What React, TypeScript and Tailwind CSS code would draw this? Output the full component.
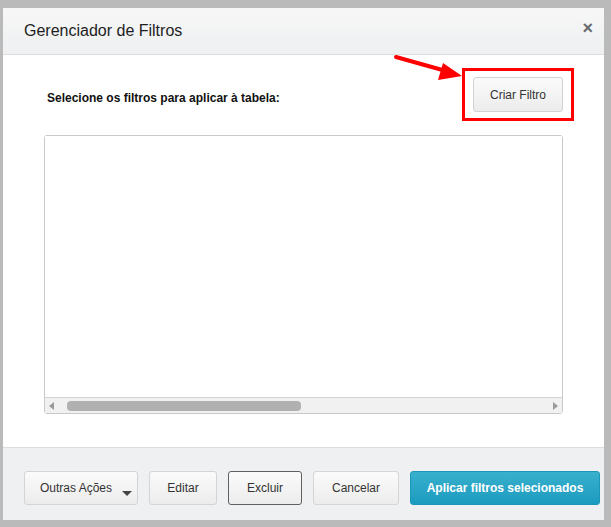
const Btn = ({ children, className = "" }: { children: React.ReactNode; className?: string }) => (
  <button
    className={
      "h-[34px] rounded-[3px] border bg-gradient-to-b from-[#fbfbfb] to-[#ececec] text-[12px] text-[#333] " +
      className
    }
  >
    {children}
  </button>
);

export default function App() {
  return (
    <div
      className="relative w-[611px] h-[527px] bg-[#bababa] pt-[8px] pl-[3px] pr-[7px] pb-[7px]"
      style={{ fontFamily: '"Liberation Sans", Arial, sans-serif' }}
    >
      <div className="flex flex-col h-full bg-white">
        {/* header */}
        <div className="h-[47px] shrink-0 flex items-center justify-between pl-[21px] pr-[11px] border-b border-[#dcdcdc] bg-gradient-to-b from-[#f7f7f7] to-[#eef0f1]">
          <span className="text-[16px] text-[#1e1e1e]">Gerenciador de Filtros</span>
          <span className="text-[18px] font-bold leading-none text-[#666a70] -mt-[6px]">×</span>
        </div>

        {/* body */}
        <div className="flex-1 flex flex-col px-[41px] pt-[22px]">
          <div className="flex items-center justify-between h-[35px]">
            <span className="pl-[3px] pt-[6px] text-[12px] font-bold text-[#111]">
              Selecione os filtros para aplicar à tabela:
            </span>
            <div className="relative">
              <Btn className="w-[90px] h-[35px] border-[#d2d2d2] text-[11px]">Criar Filtro</Btn>
              <div className="absolute -left-[11px] -right-[11px] -top-[9px] -bottom-[9px] border-[3px] border-[#ff0000] pointer-events-none" />
            </div>
          </div>

          <div className="mt-[23px] h-[279px] flex flex-col border border-[#c9c9c9] rounded-[3px]">
            <div className="flex-1 bg-white" />
            <div className="h-[16px] flex items-center bg-[#f1f1f1] border-t border-[#d4d4d4] px-[4px]">
              <span className="w-0 h-0 border-y-[4px] border-y-transparent border-r-[5px] border-r-[#9a9a9a]" />
              <div className="ml-[13px] w-[234px] h-[10px] rounded-[4px] bg-[#b0b0b0]" />
              <div className="flex-1" />
              <span className="w-0 h-0 border-y-[4px] border-y-transparent border-l-[5px] border-l-[#9a9a9a]" />
            </div>
          </div>
        </div>

        {/* footer */}
        <div className="h-[73px] shrink-0 flex items-start gap-[11px] pt-[23px] pl-[21px] border-t border-[#dcdcdc] bg-[#eff0f1]">
          <Btn className="relative w-[114px] border-[#d4d4d4] text-left pl-[15px]">
            Outras Ações
            <span className="absolute right-[5px] top-[19px] w-0 h-0 border-x-[5px] border-x-transparent border-t-[5px] border-t-[#444]" />
          </Btn>
          <Btn className="w-[68px] border-[#d4d4d4]">Editar</Btn>
          <Btn className="w-[74px] border-[#606060]">Excluir</Btn>
          <Btn className="w-[86px] border-[#d4d4d4]">Cancelar</Btn>
          <button className="h-[34px] w-[190px] rounded-[3px] border border-[#1a97b9] bg-gradient-to-b from-[#38b0cd] to-[#1a9bbf] text-[12px] font-bold text-white">
            Aplicar filtros selecionados
          </button>
        </div>
      </div>

      {/* annotation arrow */}
      <svg className="absolute left-0 top-0 pointer-events-none" width="611" height="527">
        <line x1="396" y1="57" x2="446" y2="71" stroke="#ff0000" strokeWidth="4" strokeLinecap="round" />
        <polygon points="462,76 443,63 438,80" fill="#ff0000" />
      </svg>
    </div>
  );
}
